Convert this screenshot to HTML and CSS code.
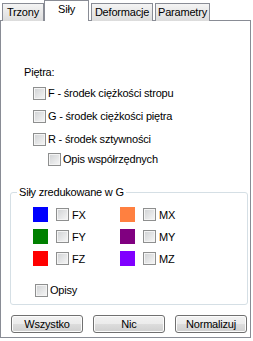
FILE: index.html
```html
<!DOCTYPE html>
<html lang="pl">
<head>
    <meta charset="UTF-8">
    <meta name="viewport" content="width=device-width, initial-scale=1.0">
    <title>Siły</title>
    <link rel="stylesheet" href="styles.css">
</head>
<body>
    <div class="window">
        <!-- Tab strip -->
        <div class="tabs">
            <div class="tab tab-trzony">Trzony</div>
            <div class="tab tab-sily active">Siły</div>
            <div class="tab tab-deformacje">Deformacje</div>
            <div class="tab tab-parametry">Parametry</div>
        </div>

        <div class="panel">
            <div class="caption">Piętra:</div>
            <label class="check row-f"><span class="box"></span>F - środek ciężkości stropu</label>
            <label class="check row-g"><span class="box"></span>G - środek ciężkości piętra</label>
            <label class="check row-r"><span class="box"></span>R - środek sztywności</label>
            <label class="check row-opis"><span class="box"></span>Opis współrzędnych</label>

            <!-- Reduced forces group -->
            <fieldset class="group">
                <legend>Siły zredukowane w G</legend>
                <div class="forces">
                    <div class="force"><span class="swatch c-fx"></span><span class="box"></span>FX</div>
                    <div class="force"><span class="swatch c-mx"></span><span class="box"></span>MX</div>
                    <div class="force"><span class="swatch c-fy"></span><span class="box"></span>FY</div>
                    <div class="force"><span class="swatch c-my"></span><span class="box"></span>MY</div>
                    <div class="force"><span class="swatch c-fz"></span><span class="box"></span>FZ</div>
                    <div class="force"><span class="swatch c-mz"></span><span class="box"></span>MZ</div>
                </div>
                <label class="check row-opisy"><span class="box"></span>Opisy</label>
            </fieldset>

            <div class="buttons">
                <button>Wszystko</button>
                <button>Nic</button>
                <button>Normalizuj</button>
            </div>
        </div>
    </div>
</body>
</html>
```

FILE: styles.css
```css
/* Windows style tab dialog */
body {
    margin: 0;
    padding: 0;
    background-color: #fff;
    font-family: "Liberation Sans", Arial, sans-serif;
    font-size: 11px;
    letter-spacing: -0.2px;
    color: #000;
}

.window {
    width: 253px;
    height: 341px;
}

.tabs {
    display: flex;
    align-items: flex-end;
    height: 21px;
    margin-bottom: -1px;
    padding-left: 2px;
}

.tab {
    box-sizing: border-box;
    height: 18px;
    border: 1px solid #898c95;
    border-bottom: none;
    background: linear-gradient(#f4f4f4, #e8e8e8 50%, #dcdcdc);
    text-align: center;
    line-height: 16px;
}

.tab-trzony { width: 42px; }
.tab-deformacje { width: 62px; margin-left: 2px; }
.tab-parametry { width: 55px; margin-left: 2px; }

.tab.active {
    position: relative;
    z-index: 1;
    width: 45px;
    height: 21px;
    background: #fff;
    line-height: 13px;
    padding-top: 2px;
}

.panel {
    box-sizing: border-box;
    width: 251px;
    height: 318px;
    border: 1px solid #898c95;
    background-color: #fff;
    padding-top: 45px;
}

.caption {
    margin-left: 23px;
    line-height: 13px;
}

.check {
    display: flex;
    align-items: center;
    gap: 2px;
    height: 13px;
    line-height: 13px;
}

.box {
    box-sizing: border-box;
    width: 13px;
    height: 13px;
    border: 1px solid #8e8f8f;
    background: linear-gradient(135deg, #cfd1d3, #f7f7f7);
    box-shadow: inset 0 0 0 1px #f4f4f4;
    flex-shrink: 0;
}

.row-f { margin: 8px 0 0 32px; }
.row-g { margin: 10px 0 0 32px; }
.row-r { margin: 10px 0 0 32px; }
.row-opis { margin: 7px 0 0 47px; }

.group {
    box-sizing: border-box;
    width: 238px;
    margin: 20px 0 0 9px;
    padding: 0 0 7px 0;
    border: 1px solid #d5dfe5;
    border-radius: 3px;
}

.group legend {
    margin-left: 6px;
    padding: 0 2px;
    line-height: 13px;
}

.forces {
    display: grid;
    grid-template-columns: 87px 87px;
    row-gap: 7px;
    margin: 8px 0 0 22px;
}

.force {
    display: flex;
    align-items: center;
    height: 15px;
}

.force .swatch {
    width: 15px;
    height: 15px;
    margin-right: 8px;
}

.force .box {
    margin-right: 3px;
}

.c-fx { background-color: #0000ff; }
.c-fy { background-color: #008000; }
.c-fz { background-color: #ff0000; }
.c-mx { background-color: #ff8040; }
.c-my { background-color: #800080; }
.c-mz { background-color: #8000ff; }

.row-opisy { margin: 18px 0 0 24px; }

.buttons {
    display: flex;
    gap: 10px;
    margin: 10px 0 0 10px;
}

button {
    box-sizing: border-box;
    width: 72px;
    height: 18px;
    padding: 0;
    border: 1px solid #707070;
    border-radius: 3px;
    background: linear-gradient(#f2f2f2, #ebebeb 50%, #dddddd 50%, #cfcfcf);
    box-shadow: inset 0 0 0 1px #fcfcfc;
    font-family: "Liberation Sans", Arial, sans-serif;
    font-size: 11px;
    letter-spacing: -0.2px;
    color: #000;
}
```
